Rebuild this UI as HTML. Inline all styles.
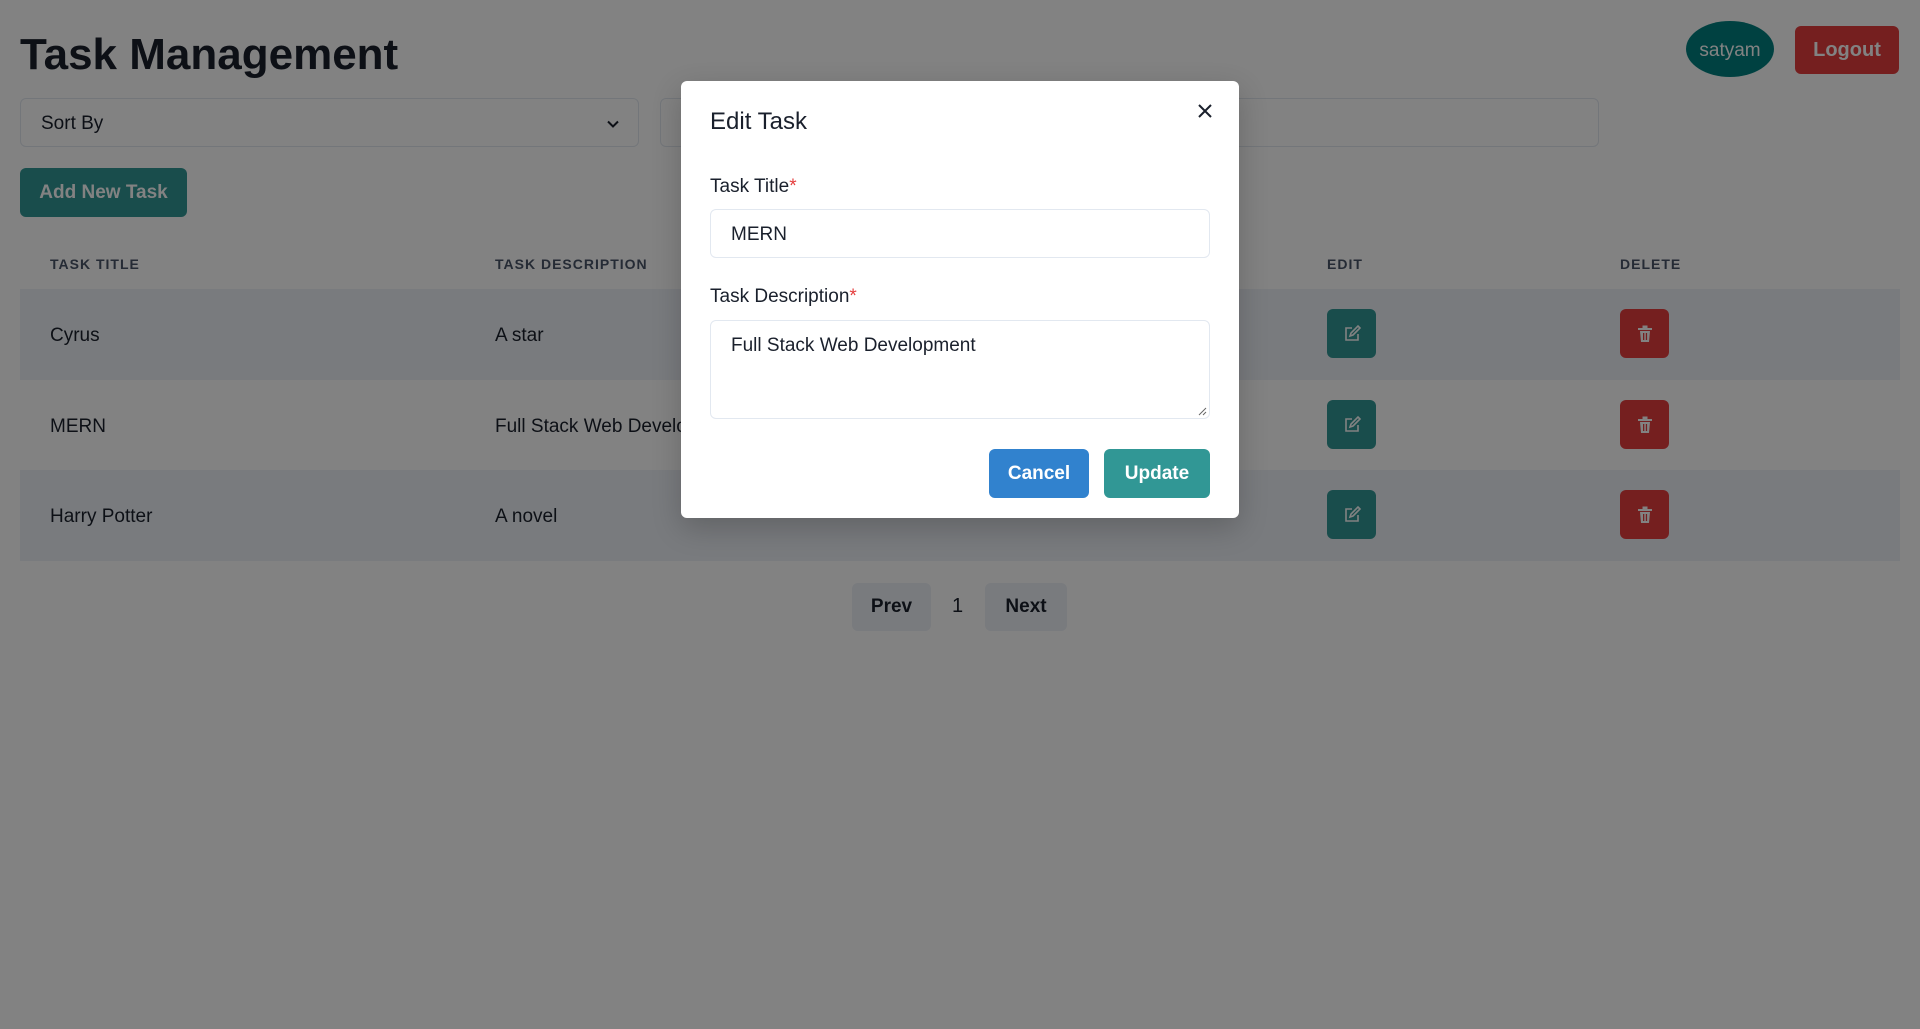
<!DOCTYPE html>
<html><head><meta charset="utf-8"><style>
*{box-sizing:border-box;margin:0;padding:0}
body{width:1920px;height:1029px;background:#fff;font-family:"Liberation Sans",sans-serif;color:#1a202c;position:relative;overflow:hidden}
.abs{position:absolute}
h1{position:absolute;left:20px;top:27px;font-size:44px;font-weight:700;line-height:56px}
.sat{left:1686px;top:21px;width:88px;height:56px;border-radius:50%;background:#008080;color:#fff;font-size:19px;display:flex;align-items:center;justify-content:center;padding-top:3px}
.logout{left:1795px;top:26px;width:104px;height:48px;border-radius:6px;background:#e53e3e;color:#fff;font-size:20px;font-weight:700;display:flex;align-items:center;justify-content:center}
.sel{left:20px;top:98px;width:619px;height:49px;border:1px solid #e2e8f0;border-radius:6px;font-size:19px;padding:14px 20px}
.inp2{left:660px;top:98px;width:939px;height:49px;border:1px solid #e2e8f0;border-radius:6px}
.add{left:20px;top:168px;width:167px;height:49px;border-radius:6px;background:#319795;color:#fff;font-weight:700;font-size:19px;display:flex;align-items:center;justify-content:center}
.th{top:256px;font-size:14px;font-weight:700;letter-spacing:1px;color:#4a5568}
.row{left:20px;width:1880px;height:91px}
.row.s{background:#edf2f7}
.cell{font-size:19px;line-height:93px}
.eb,.db{position:absolute;width:49px;height:49px;border-radius:6px;display:flex;align-items:center;justify-content:center}
.eb{background:#319795}.db{background:#e53e3e}
.pg{top:583px;height:48px;border-radius:6px;background:#edf2f7;font-size:19px;font-weight:700;display:flex;align-items:center;justify-content:center}
.ov{left:0;top:0;width:1920px;height:1029px;background:rgba(0,0,0,0.49)}
.modal{left:681px;top:81px;width:558px;height:437px;background:#fff;border-radius:6px;box-shadow:0 10px 30px rgba(0,0,0,.2)}
.lbl{font-size:19px;color:#1a202c}
.lbl b{color:#e53e3e;font-weight:400}
.mi{border:1px solid #e2e8f0;border-radius:6px;font-size:19px;padding:0 20px;color:#1a202c}
</style></head><body>
<h1>Task Management</h1>
<div class="abs sat">satyam</div>
<div class="abs logout">Logout</div>
<div class="abs sel">Sort By<svg class="abs" style="right:18px;top:18px" width="14" height="14" viewBox="0 0 14 14"><path d="M2 4.5l5 5 5-5" fill="none" stroke="#1a202c" stroke-width="2"/></svg></div>
<div class="abs inp2"></div>
<div class="abs add">Add New Task</div>
<div class="abs th" style="left:50px">TASK TITLE</div>
<div class="abs th" style="left:495px">TASK DESCRIPTION</div>
<div class="abs th" style="left:1327px">EDIT</div>
<div class="abs th" style="left:1620px">DELETE</div>

<div class="abs row s" style="top:289px"></div>
<div class="abs row" style="top:380px"></div>
<div class="abs row s" style="top:470px"></div>
<div class="abs cell" style="left:50px;top:289px">Cyrus</div>
<div class="abs cell" style="left:495px;top:289px">A star</div>
<div class="abs cell" style="left:50px;top:380px">MERN</div>
<div class="abs cell" style="left:495px;top:380px">Full Stack Web Development</div>
<div class="abs cell" style="left:50px;top:470px">Harry Potter</div>
<div class="abs cell" style="left:495px;top:470px">A novel</div>

<div class="eb" style="left:1327px;top:309px"><svg width="20" height="20" viewBox="0 0 20 20" fill="none" stroke="#fff" stroke-width="1.6"><path d="M10 4H4v12h12v-6"/><path d="M8 12l1-3 7-7 2 2-7 7z"/></svg></div>
<div class="eb" style="left:1327px;top:400px"><svg width="20" height="20" viewBox="0 0 20 20" fill="none" stroke="#fff" stroke-width="1.6"><path d="M10 4H4v12h12v-6"/><path d="M8 12l1-3 7-7 2 2-7 7z"/></svg></div>
<div class="eb" style="left:1327px;top:490px"><svg width="20" height="20" viewBox="0 0 20 20" fill="none" stroke="#fff" stroke-width="1.6"><path d="M10 4H4v12h12v-6"/><path d="M8 12l1-3 7-7 2 2-7 7z"/></svg></div>
<div class="db" style="left:1620px;top:309px"><svg width="18" height="20" viewBox="0 0 18 20" fill="#fff"><rect x="2" y="4" width="14" height="2"/><rect x="6.5" y="1.5" width="5" height="2.5"/><path d="M4 7h10l-1 11H5z"/><rect x="7" y="9" width="1.3" height="7" fill="#e53e3e"/><rect x="9.8" y="9" width="1.3" height="7" fill="#e53e3e"/></svg></div>
<div class="db" style="left:1620px;top:400px"><svg width="18" height="20" viewBox="0 0 18 20" fill="#fff"><rect x="2" y="4" width="14" height="2"/><rect x="6.5" y="1.5" width="5" height="2.5"/><path d="M4 7h10l-1 11H5z"/><rect x="7" y="9" width="1.3" height="7" fill="#e53e3e"/><rect x="9.8" y="9" width="1.3" height="7" fill="#e53e3e"/></svg></div>
<div class="db" style="left:1620px;top:490px"><svg width="18" height="20" viewBox="0 0 18 20" fill="#fff"><rect x="2" y="4" width="14" height="2"/><rect x="6.5" y="1.5" width="5" height="2.5"/><path d="M4 7h10l-1 11H5z"/><rect x="7" y="9" width="1.3" height="7" fill="#e53e3e"/><rect x="9.8" y="9" width="1.3" height="7" fill="#e53e3e"/></svg></div>

<div class="abs pg" style="left:852px;width:79px">Prev</div>
<div class="abs" style="left:952px;top:595px;font-size:20px;color:#1a202c">1</div>
<div class="abs pg" style="left:985px;width:82px">Next</div>

<div class="abs ov"></div>
<div class="abs modal">
  <div class="abs" style="left:29px;top:27px;font-size:24px">Edit Task</div>
  <svg class="abs" style="left:516px;top:22px" width="16" height="16" viewBox="0 0 16 16"><path d="M2 2l12 12M14 2L2 14" stroke="#1a202c" stroke-width="2"/></svg>
  <div class="abs lbl" style="left:29px;top:95px">Task Title<b>*</b></div>
  <div class="abs mi" style="left:29px;top:128px;width:500px;height:49px;line-height:49px">MERN</div>
  <div class="abs lbl" style="left:29px;top:205px">Task Description<b>*</b></div>
  <div class="abs mi" style="left:29px;top:239px;width:500px;height:99px;padding-top:13px;line-height:24px">Full Stack Web Development
    <svg class="abs" style="right:2px;bottom:2px" width="10" height="10" viewBox="0 0 10 10"><path d="M9 2L2 9M9 6L6 9" stroke="#666" stroke-width="1"/></svg></div>
  <div class="abs" style="left:308px;top:368px;width:100px;height:49px;border-radius:6px;background:#3182ce;color:#fff;font-weight:700;font-size:19px;display:flex;align-items:center;justify-content:center">Cancel</div>
  <div class="abs" style="left:423px;top:368px;width:106px;height:49px;border-radius:6px;background:#319795;color:#fff;font-weight:700;font-size:19px;display:flex;align-items:center;justify-content:center">Update</div>
</div>
</body></html>
